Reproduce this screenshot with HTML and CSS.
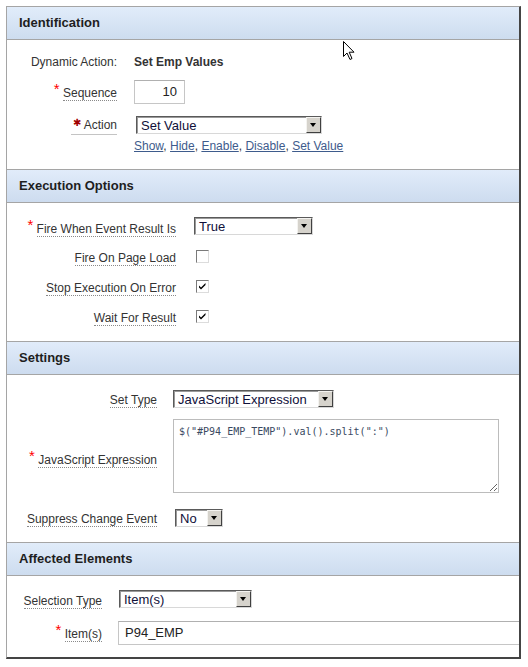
FILE: index.html
```html
<!DOCTYPE html>
<html>
<head>
    <title>Dynamic Action - Set Emp Values</title>
    <meta charset="UTF-8">
    <link rel="stylesheet" href="styles.css">
</head>
<body>
    <div class="panel">
        <div class="region">
            <div class="region-head">Identification</div>
            <div class="region-body form-id">
                <div class="row">
                    <span class="label plain">Dynamic Action:</span>
                    <span class="value-text">Set Emp Values</span>
                </div>
                <div class="row row-input">
                    <span class="label"><span class="req">*</span> <span class="lbl">Sequence</span></span>
                    <div class="text-input seq">10</div>
                </div>
                <div class="row">
                    <span class="label"><span class="hover-lbl"><span class="req dark">&#x2731;</span> Action</span></span>
                    <div class="select shift" style="width: 186px;">
                        <span class="select-text">Set Value</span>
                        <span class="select-btn"></span>
                    </div>
                </div>
                <div class="row links-row">
                    <span></span>
                    <div class="links">
                        <a href="#">Show</a>, <a href="#">Hide</a>, <a href="#">Enable</a>, <a href="#">Disable</a>, <a href="#">Set Value</a>
                    </div>
                </div>
            </div>
        </div>

        <div class="region">
            <div class="region-head">Execution Options</div>
            <div class="region-body form-exec">
                <div class="row">
                    <span class="label"><span class="req">*</span> <span class="lbl">Fire When Event Result Is</span></span>
                    <div class="select" style="width: 119px;">
                        <span class="select-text">True</span>
                        <span class="select-btn"></span>
                    </div>
                </div>
                <div class="row">
                    <span class="label"><span class="lbl">Fire On Page Load</span></span>
                    <span class="checkbox"></span>
                </div>
                <div class="row">
                    <span class="label"><span class="lbl">Stop Execution On Error</span></span>
                    <span class="checkbox checked">
                        <svg width="11" height="11" viewBox="0 0 11 11"><path d="M2 4.5 L4 6.5 L8.5 2 L8.5 4 L4 8.5 L2 6.5 Z" fill="#000"/></svg>
                    </span>
                </div>
                <div class="row">
                    <span class="label"><span class="lbl">Wait For Result</span></span>
                    <span class="checkbox checked">
                        <svg width="11" height="11" viewBox="0 0 11 11"><path d="M2 4.5 L4 6.5 L8.5 2 L8.5 4 L4 8.5 L2 6.5 Z" fill="#000"/></svg>
                    </span>
                </div>
            </div>
        </div>

        <div class="region">
            <div class="region-head">Settings</div>
            <div class="region-body form-settings">
                <div class="row">
                    <span class="label"><span class="lbl">Set Type</span></span>
                    <div class="select" style="width: 161px;">
                        <span class="select-text">JavaScript Expression</span>
                        <span class="select-btn"></span>
                    </div>
                </div>
                <div class="row row-area">
                    <span class="label"><span class="req">*</span> <span class="lbl">JavaScript Expression</span></span>
                    <textarea class="code-area" readonly>$("#P94_EMP_TEMP").val().split(":")</textarea>
                </div>
                <div class="row">
                    <span class="label"><span class="lbl">Suppress Change Event</span></span>
                    <div class="select shift" style="width: 48px;">
                        <span class="select-text">No</span>
                        <span class="select-btn"></span>
                    </div>
                </div>
            </div>
        </div>

        <div class="region">
            <div class="region-head">Affected Elements</div>
            <div class="region-body form-affected">
                <div class="row">
                    <span class="label"><span class="lbl">Selection Type</span></span>
                    <div class="select nudge" style="width: 133px;">
                        <span class="select-text">Item(s)</span>
                        <span class="select-btn"></span>
                    </div>
                </div>
                <div class="row row-input">
                    <span class="label"><span class="req">*</span> <span class="lbl">Item(s)</span></span>
                    <div class="text-input items">P94_EMP</div>
                </div>
            </div>
        </div>

        <svg class="cursor" width="13" height="20" viewBox="0 0 13 20">
            <path d="M0.5 0.5 L0.5 15.5 L4 12 L7 18.5 L9 17.5 L6.2 11.2 L11 11.2 Z" fill="#fff" stroke="#000" stroke-width="1"/>
        </svg>
    </div>
</body>
</html>
```

FILE: styles.css
```css
body {
    margin: 0;
    background: #fff;
    font-family: "Liberation Sans", Arial, sans-serif;
    font-size: 12px;
    color: #333;
}
.panel {
    position: relative;
    margin: 6px 0 0 6px;
    width: 512px;
    border-top: 1px solid #a5a5a5;
    border-left: 1px solid #a5a5a5;
    border-right: 2px solid #444;
    border-bottom: 2px solid #444;
    overflow: hidden;
}
.region + .region {
    border-top: 1px solid #a5a5a5;
}
.region-head {
    height: 32px;
    line-height: 32px;
    padding-left: 12px;
    font-size: 13px;
    font-weight: bold;
    color: #1e1e1e;
    background: linear-gradient(#e1ecfa, #cddcef);
    border-bottom: 1px solid #a5a5a5;
}
.region-body {
    display: flex;
    flex-direction: column;
    box-sizing: border-box;
}
.row {
    display: grid;
    align-items: center;
    min-height: 18px;
}
.label {
    text-align: right;
    white-space: nowrap;
    line-height: 16px;
    margin: 1px 0 -1px;
}
.form-exec .label,
.form-affected .label {
    margin: 2px 0 -2px;
}
.row-input .label {
    margin: 0 !important;
}
.lbl {
    border-bottom: 1px dotted #8a8a8a;
}
.label.plain {
    color: #333;
}
.hover-lbl {
    display: inline-block;
    padding: 0 0 1px 2px;
    border-bottom: 1px solid #c4c4c4;
    line-height: 15px;
}
.req {
    color: #f00;
    font-size: 15px;
    vertical-align: 3px;
    line-height: 10px;
}
.req.dark {
    color: #a00000;
    font-size: 10px;
    vertical-align: 3px;
}
.value-text {
    font-weight: bold;
    margin: 1px 0 -1px;
}

/* section layouts */
.form-id {
    height: 129px;
    padding-top: 12px;
}
.form-id .row {
    grid-template-columns: 110px auto;
    column-gap: 17px;
}
.form-id .row + .row {
    margin-top: 10px;
}
.form-id .row + .row + .row {
    margin-top: 12px;
}
.form-id .links-row {
    margin-top: 4px !important;
    min-height: 16px;
}
.form-exec {
    height: 138px;
    padding-top: 14px;
    gap: 12px;
}
.form-exec .row {
    grid-template-columns: 169px auto;
    column-gap: 18px;
}
.form-settings {
    height: 167px;
    padding-top: 15px;
}
.form-settings .row {
    grid-template-columns: 150px auto;
    column-gap: 16px;
}
.form-settings .row-area {
    margin-top: 11px;
}
.form-settings .row-area .label {
    margin: 7px 0 0;
}
.form-settings .row-area + .row {
    margin-top: 16px;
}
.form-affected {
    height: 81px;
    padding-top: 14px;
}
.form-affected .row {
    grid-template-columns: 95px auto;
    column-gap: 16px;
}
.form-affected .row + .row {
    margin-top: 13px;
}

/* controls */
.select {
    display: flex;
    height: 18px;
    box-sizing: border-box;
    border: 1px solid;
    border-color: #5a5a5a #d8d8d8 #d8d8d8 #5a5a5a;
    box-shadow: inset 1px 1px 0 #9a9a9a;
    background: #fff;
}
.select.shift {
    margin-left: 2px;
}
.select.nudge {
    margin-left: 1px;
}
.select-text {
    flex: 1;
    padding: 1px 0 0 4px;
    font-size: 13px;
    line-height: 15px;
    color: #10103a;
    white-space: nowrap;
    overflow: hidden;
}
.select-btn {
    position: relative;
    width: 15px;
    box-sizing: border-box;
    background: #d6d3cc;
    border: 1px solid;
    border-color: #f4f3f0 #404040 #404040 #f4f3f0;
}
.select-btn::after {
    content: "";
    position: absolute;
    left: 3px;
    top: 5px;
    border-left: 3.5px solid transparent;
    border-right: 3.5px solid transparent;
    border-top: 4px solid #000;
}
.text-input {
    box-sizing: border-box;
    height: 24px;
    border: 1px solid #c6c6c6;
    border-top-color: #b0b0b0;
    font-size: 13px;
    line-height: 22px;
    color: #222;
}
.text-input.seq {
    width: 51px;
    text-align: right;
    padding-right: 7px;
}
.text-input.items {
    width: 420px;
    padding-left: 6px;
}
.checkbox {
    display: flex;
    align-items: center;
    justify-content: center;
    width: 13px;
    height: 13px;
    box-sizing: border-box;
    margin: 1px 0 0 2px;
    border: 1px solid;
    border-color: #7a7a7a #dcdcdc #dcdcdc #7a7a7a;
    background: #fff;
}
.code-area {
    display: block;
    width: 326px;
    height: 74px;
    box-sizing: border-box;
    margin: 0;
    padding: 5px 5px;
    border: 1px solid #bcbcbc;
    font-family: "DejaVu Sans Mono", "Liberation Mono", monospace;
    font-size: 10px;
    line-height: 14px;
    color: #3a4a62;
    resize: both;
    outline: none;
}
.links {
    line-height: 16px;
}
.links a {
    color: #3e5b8c;
}
.cursor {
    position: absolute;
    left: 336px;
    top: 34px;
}
```
